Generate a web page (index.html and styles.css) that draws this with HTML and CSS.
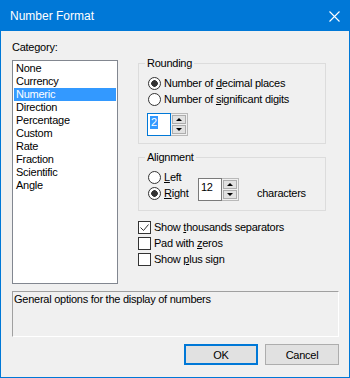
FILE: index.html
```html
<!DOCTYPE html>
<html lang="en">
<head>
  <meta charset="UTF-8">
  <title>Number Format</title>
  <link rel="stylesheet" href="styles.css">
</head>
<body>
  <div class="window">
    <div class="titlebar">
      <span class="title">Number Format</span>
      <svg class="close" width="11" height="11" viewBox="0 0 11 11">
        <path d="M0.5 0.5 L10.5 10.5 M10.5 0.5 L0.5 10.5" stroke="#fff" stroke-width="1.1" fill="none"/>
      </svg>
    </div>

    <div class="client">
      <div class="columns">
        <div class="category">
          <div class="label">Category:</div>
          <ul class="listbox">
            <li>None</li>
            <li>Currency</li>
            <li class="selected">Numeric</li>
            <li>Direction</li>
            <li>Percentage</li>
            <li>Custom</li>
            <li>Rate</li>
            <li>Fraction</li>
            <li>Scientific</li>
            <li>Angle</li>
          </ul>
        </div>

        <div class="options">
          <fieldset class="group rounding">
            <legend>Rounding</legend>
            <div class="option"><span class="radio checked"></span><span>Number of <u>d</u>ecimal places</span></div>
            <div class="option"><span class="radio"></span><span>Number of <u>s</u>ignificant digits</span></div>
            <div class="spin first">
              <div class="edit focused"><span class="sel">2</span></div>
              <div class="updown">
                <div class="arrow-btn"><span class="arrow up"></span></div>
                <div class="arrow-btn"><span class="arrow down"></span></div>
              </div>
            </div>
          </fieldset>

          <fieldset class="group alignment">
            <legend>Alignment</legend>
            <div class="align-body">
              <div class="radios">
                <div class="option"><span class="radio"></span><span><u>L</u>eft</span></div>
                <div class="option"><span class="radio checked"></span><span><u>R</u>ight</span></div>
              </div>
              <div class="spin">
                <div class="edit">12</div>
                <div class="updown">
                  <div class="arrow-btn"><span class="arrow up"></span></div>
                  <div class="arrow-btn"><span class="arrow down"></span></div>
                </div>
              </div>
              <div class="unit">characters</div>
            </div>
          </fieldset>

          <div class="checks">
            <div class="option">
              <span class="checkbox">
                <svg width="11" height="11" viewBox="0 0 11 11"><path d="M1.5 5.5 L4.5 8.5 L9.5 2.5" stroke="#333" stroke-width="1" fill="none"/></svg>
              </span>
              <span>Show <u>t</u>housands separators</span>
            </div>
            <div class="option"><span class="checkbox"></span><span>Pad with <u>z</u>eros</span></div>
            <div class="option"><span class="checkbox"></span><span>Show <u>p</u>lus sign</span></div>
          </div>
        </div>
      </div>

      <div class="description">General options for the display of numbers</div>

      <div class="buttons">
        <button class="btn default">OK</button>
        <button class="btn">Cancel</button>
      </div>
    </div>
  </div>
</body>
</html>
```

FILE: styles.css
```css
body {
  margin: 0;
  font-family: "Liberation Sans", Arial, sans-serif;
  font-size: 11px;
  letter-spacing: -0.25px;
  color: #000;
  background: #f0f0f0;
}
.window {
  width: 350px;
  height: 378px;
  box-sizing: border-box;
  border: 1px solid #0078d7;
  background: #f0f0f0;
  display: flex;
  flex-direction: column;
}
.titlebar {
  height: 30px;
  background: #0078d7;
  color: #fff;
  display: flex;
  align-items: center;
  padding: 0 9px 0 9px;
  font-size: 12px;
  letter-spacing: 0;
}
.close {
  margin-left: auto;
  display: block;
}
.client {
  padding: 10px 10px 0 11px;
}
.columns {
  display: flex;
  gap: 20px;
}
.category {
  width: 106px;
}
.label {
  line-height: 13px;
  margin-bottom: 6px;
}
.listbox {
  list-style: none;
  margin: 0;
  padding: 1px;
  height: 224px;
  box-sizing: border-box;
  border: 1px solid #828790;
  background: #fff;
}
.listbox li {
  line-height: 13px;
  padding-left: 2px;
}
.listbox .selected {
  background: #3399ff;
  color: #fff;
}
.options {
  width: 188px;
  padding-top: 16px;
}
.group {
  margin: 0;
  border: 1px solid #dcdcdc;
  padding: 5px 8px 7px 9px;
  min-inline-size: 0;
}
.group legend {
  padding: 0 2px;
  margin-left: -3px;
  line-height: 13px;
}
.alignment {
  margin-top: 7px;
  padding-bottom: 9px;
}
.option {
  display: flex;
  align-items: center;
  height: 16px;
  gap: 3px;
  white-space: nowrap;
}
.radio {
  width: 13px;
  height: 13px;
  box-sizing: border-box;
  border: 1px solid #333;
  border-radius: 50%;
  background: #fff;
  flex: none;
}
.radio.checked {
  background: radial-gradient(circle at center, #333 0, #333 3px, #fff 3.6px);
}
.checkbox {
  width: 13px;
  height: 13px;
  box-sizing: border-box;
  border: 1px solid #333;
  background: #fff;
  flex: none;
  display: flex;
}
.checkbox svg {
  display: block;
}
.spin {
  display: flex;
  height: 23px;
}
.spin.first {
  margin-top: 6px;
  margin-left: -1px;
}
.edit {
  width: 24px;
  height: 23px;
  box-sizing: border-box;
  border: 1px solid #7a7a7a;
  background: #fff;
  padding: 2px 0 0 2px;
  line-height: 13px;
}
.edit.focused {
  border-color: #0078d7;
}
.edit .sel {
  display: inline-block;
  background: #3399ff;
  color: #fff;
  padding: 0 1px;
}
.updown {
  width: 17px;
  box-sizing: border-box;
  border: 1px solid #b9b9b9;
  border-left: none;
  padding: 1px;
  display: flex;
  flex-direction: column;
  gap: 1px;
}
.arrow-btn {
  flex: 1;
  border: 1px solid #adadad;
  background: #e1e1e1;
  display: flex;
  align-items: center;
  justify-content: center;
}
.arrow {
  width: 0;
  height: 0;
  border-left: 3px solid transparent;
  border-right: 3px solid transparent;
}
.arrow.up {
  border-bottom: 3px solid #000;
}
.arrow.down {
  border-top: 3px solid #000;
}
.align-body {
  display: flex;
  align-items: flex-end;
}
.radios {
  width: 50px;
}
.unit {
  margin-left: 18px;
  line-height: 16px;
}
.checks {
  margin-top: 8px;
}
.description {
  margin-top: 7px;
  height: 46px;
  box-sizing: border-box;
  border-top: 1px solid #a0a0a0;
  border-left: 1px solid #a0a0a0;
  border-right: 1px solid #fff;
  border-bottom: 1px solid #fff;
  padding: 1px 1px;
  line-height: 13px;
}
.buttons {
  margin-top: 7px;
  display: flex;
  justify-content: flex-end;
  gap: 7px;
}
.btn {
  width: 74px;
  height: 21px;
  box-sizing: border-box;
  border: 1px solid #adadad;
  background: #e1e1e1;
  font-family: inherit;
  font-size: 11px;
  letter-spacing: -0.25px;
  color: #000;
  padding: 0;
}
.btn.default {
  border: 2px solid #0078d7;
}
```
